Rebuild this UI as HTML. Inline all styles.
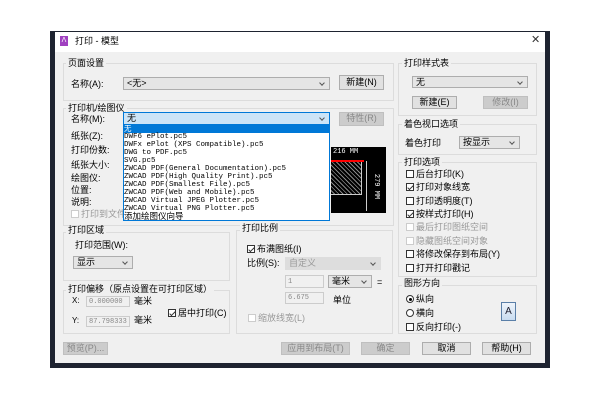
<!DOCTYPE html><html><head><meta charset="utf-8"><style>
*{margin:0;padding:0;box-sizing:border-box}
body{width:600px;height:400px;background:#fff;position:relative;overflow:hidden;font-family:"Liberation Sans","Noto Sans CJK SC",sans-serif;font-size:9px;color:#000}
.a{position:absolute;white-space:nowrap;line-height:1}
.g{position:absolute;border:1px solid #dcdcdc}
.gl{position:absolute;background:#f0f0f0;padding:0 2px;line-height:1;white-space:nowrap;font-size:9px}
.sel{position:absolute;border:1px solid #adadad;background:#e5e5e5;font-size:9px;line-height:11px;padding-left:3px}
.sel:after{content:"";position:absolute;right:5px;top:3px;width:3px;height:3px;border-right:1px solid #555;border-bottom:1px solid #555;transform:rotate(45deg)}
.dis{color:#999}
.btn{position:absolute;border:1px solid #adadad;background:#e1e1e1;text-align:center;font-size:9px;line-height:11px}
.btn.d{background:#ccc;border-color:#bfbfbf;color:#888}
.cb{position:absolute;width:8px;height:8px;border:1px solid #333;background:#fff}
.cb.k:after{content:"";position:absolute;left:2px;top:0;width:2px;height:5px;border-right:1px solid #333;border-bottom:1px solid #333;transform:rotate(45deg)}
.cb.d{border-color:#ccc}
.inp{position:absolute;border:1px solid #ccc;background:#f0f0f0;color:#888;font-family:"Liberation Mono",monospace;font-size:7px;line-height:10px;padding-left:2px}
.li{position:absolute;left:124px;font-family:"Liberation Mono",monospace;font-size:7.5px;line-height:8px;height:8px}
</style></head><body>
<div style="position:absolute;left:50px;top:31px;width:500px;height:337px;background:#1e2330"></div>
<div style="position:absolute;left:55px;top:32px;width:490px;height:331px;background:#f0f0f0"></div>
<div style="position:absolute;left:55px;top:32px;width:490px;height:20px;background:#fff"></div>
<div style="position:absolute;left:60px;top:36px;width:8px;height:10px;background:#a040c0;color:#fff;font-size:7px;line-height:10px;text-align:center">Λ</div>
<div class="a" style="left:75px;top:37px;font-size:9px">打印 - 模型</div>
<div class="a" style="left:531px;top:35px;font-size:11px;color:#333">✕</div>

<!-- 页面设置 -->
<div class="g" style="left:63px;top:63px;width:331px;height:38px"></div>
<div class="gl" style="left:66px;top:59px">页面设置</div>
<div class="a" style="left:71px;top:80px">名称(A):</div>
<div class="sel" style="left:123px;top:77px;width:207px;height:13px">&lt;无&gt;</div>
<div class="btn" style="left:339px;top:75px;width:45px;height:15px;line-height:13px">新建(N)</div>

<!-- 打印机 -->
<div class="g" style="left:63px;top:108px;width:331px;height:118px"></div>
<div class="gl" style="left:66px;top:104px">打印机/绘图仪</div>
<div class="a" style="left:71px;top:115px">名称(M):</div>
<div class="sel" style="left:123px;top:112px;width:207px;height:13px;background:#cce4f7;border-color:#0078d7">无</div>
<div class="btn d" style="left:339px;top:112px;width:45px;height:14px">特性(R)</div>
<div class="a" style="left:71px;top:132px">纸张(Z):</div>
<div class="a" style="left:71px;top:146px">打印份数:</div>
<div class="a" style="left:71px;top:161px">纸张大小:</div>
<div class="a" style="left:71px;top:174px">绘图仪:</div>
<div class="a" style="left:71px;top:186px">位置:</div>
<div class="a" style="left:71px;top:198px">说明:</div>
<div class="cb d" style="left:71px;top:210px"></div>
<div class="a dis" style="left:81px;top:210px">打印到文件</div>
<div style="position:absolute;left:331px;top:147px;width:55px;height:66px;background:#000;overflow:hidden">
<div class="a" style="left:2px;top:2px;color:#fff;font-family:'Liberation Mono',monospace;font-size:7px">216 MM</div>
<div style="position:absolute;left:0;top:13px;width:33px;height:2px;background:#f00"></div>
<div style="position:absolute;left:0;top:15px;width:31px;height:33px;border-right:1px solid #ccc;border-bottom:1px solid #ccc;background:repeating-linear-gradient(45deg,#000 0 2px,#888 2px 3px)"></div>
<div style="position:absolute;left:35px;top:14px;width:1px;height:50px;background:#ccc"></div>
<div class="a" style="left:32px;top:36px;color:#fff;font-family:'Liberation Mono',monospace;font-size:7px;transform:rotate(90deg)">279 MM</div>
</div>
<div style="position:absolute;left:123px;top:125px;width:207px;height:96px;background:#fff;border:1px solid #0078d7"></div>
<div style="position:absolute;left:124px;top:125px;width:205px;height:8px;background:#0078d7"></div>
<div class="li" style="top:125px;color:#fff;font-family:'Noto Sans CJK SC';">无</div>
<div class="li" style="top:133px">DWF6 ePlot.pc5</div>
<div class="li" style="top:141px">DWFx ePlot (XPS Compatible).pc5</div>
<div class="li" style="top:149px">DWG to PDF.pc5</div>
<div class="li" style="top:157px">SVG.pc5</div>
<div class="li" style="top:165px">ZWCAD PDF(General Documentation).pc5</div>
<div class="li" style="top:173px">ZWCAD PDF(High Quality Print).pc5</div>
<div class="li" style="top:181px">ZWCAD PDF(Smallest File).pc5</div>
<div class="li" style="top:189px">ZWCAD PDF(Web and Mobile).pc5</div>
<div class="li" style="top:197px">ZWCAD Virtual JPEG Plotter.pc5</div>
<div class="li" style="top:205px">ZWCAD Virtual PNG Plotter.pc5</div>
<div class="li" style="top:212px;font-family:'Noto Sans CJK SC';font-size:8.5px;line-height:9px">添加绘图仪向导</div>

<!-- 打印区域 -->
<div class="g" style="left:63px;top:232px;width:167px;height:49px"></div>
<div class="gl" style="left:66px;top:226px">打印区域</div>
<div class="a" style="left:75px;top:241px">打印范围(W):</div>
<div class="sel" style="left:73px;top:256px;width:60px;height:13px">显示</div>
<div class="g" style="left:63px;top:290px;width:167px;height:44px"></div>
<div class="gl" style="left:66px;top:285px">打印偏移（原点设置在可打印区域）</div>
<div class="a" style="left:72px;top:297px;font-size:8px">X:</div>
<div class="inp" style="left:86px;top:296px;width:44px;height:11px">0.000000</div>
<div class="a" style="left:134px;top:297px">毫米</div>
<div class="a" style="left:72px;top:317px;font-size:8px">Y:</div>
<div class="inp" style="left:86px;top:316px;width:44px;height:11px">87.798333</div>
<div class="a" style="left:134px;top:316px">毫米</div>
<div class="cb k" style="left:168px;top:309px"></div>
<div class="a" style="left:178px;top:309px">居中打印(C)</div>

<!-- 打印比例 -->
<div class="g" style="left:236px;top:230px;width:157px;height:104px"></div>
<div class="gl" style="left:240px;top:224px">打印比例</div>
<div class="cb k" style="left:247px;top:245px"></div>
<div class="a" style="left:257px;top:245px">布满图纸(I)</div>
<div class="a" style="left:247px;top:259px">比例(S):</div>
<div class="sel dis" style="left:285px;top:257px;width:96px;height:13px;background:#ddd;border-color:#ddd">自定义</div>
<div class="inp" style="left:285px;top:275px;width:39px;height:13px;line-height:12px">1</div>
<div class="sel" style="left:328px;top:275px;width:44px;height:13px">毫米</div>
<div class="a" style="left:377px;top:278px">=</div>
<div class="inp" style="left:285px;top:292px;width:39px;height:12px">6.675</div>
<div class="a" style="left:333px;top:296px">单位</div>
<div class="cb d" style="left:248px;top:314px"></div>
<div class="a dis" style="left:258px;top:314px">缩放线宽(L)</div>

<!-- right column -->
<div class="g" style="left:398px;top:63px;width:139px;height:53px"></div>
<div class="gl" style="left:402px;top:59px">打印样式表</div>
<div class="sel" style="left:412px;top:76px;width:116px;height:12px">无</div>
<div class="btn" style="left:412px;top:96px;width:45px;height:13px">新建(E)</div>
<div class="btn d" style="left:483px;top:96px;width:45px;height:13px">修改(I)</div>
<div class="g" style="left:398px;top:124px;width:139px;height:31px"></div>
<div class="gl" style="left:402px;top:120px">着色视口选项</div>
<div class="a" style="left:405px;top:139px">着色打印</div>
<div class="sel" style="left:459px;top:136px;width:61px;height:13px">按显示</div>
<div class="g" style="left:398px;top:162px;width:139px;height:115px"></div>
<div class="gl" style="left:402px;top:158px">打印选项</div>
<div class="cb" style="left:406px;top:170px"></div><div class="a" style="left:416px;top:170px">后台打印(K)</div>
<div class="cb k" style="left:406px;top:183px"></div><div class="a" style="left:416px;top:183px">打印对象线宽</div>
<div class="cb" style="left:406px;top:197px"></div><div class="a" style="left:416px;top:197px">打印透明度(T)</div>
<div class="cb k" style="left:406px;top:210px"></div><div class="a" style="left:416px;top:210px">按样式打印(H)</div>
<div class="cb d" style="left:406px;top:223px"></div><div class="a dis" style="left:416px;top:223px">最后打印图纸空间</div>
<div class="cb d" style="left:406px;top:237px"></div><div class="a dis" style="left:416px;top:237px">隐藏图纸空间对象</div>
<div class="cb" style="left:406px;top:250px"></div><div class="a" style="left:416px;top:250px">将修改保存到布局(Y)</div>
<div class="cb" style="left:406px;top:264px"></div><div class="a" style="left:416px;top:264px">打开打印戳记</div>
<div class="g" style="left:398px;top:285px;width:139px;height:49px"></div>
<div class="gl" style="left:402px;top:279px">图形方向</div>
<div style="position:absolute;left:406px;top:295px;width:8px;height:8px;border:1px solid #333;border-radius:50%;background:#fff"><div style="position:absolute;left:1.5px;top:1.5px;width:3px;height:3px;border-radius:50%;background:#000"></div></div>
<div class="a" style="left:416px;top:295px">纵向</div>
<div style="position:absolute;left:406px;top:309px;width:8px;height:8px;border:1px solid #333;border-radius:50%;background:#fff"></div>
<div class="a" style="left:416px;top:309px">横向</div>
<div class="cb" style="left:406px;top:323px"></div><div class="a" style="left:416px;top:323px">反向打印(-)</div>
<div style="position:absolute;left:501px;top:302px;width:15px;height:19px;border:1px solid #5a7fa8;background:linear-gradient(#eef4fb,#c9dcf0);font-size:10px;text-align:center;line-height:17px;color:#223">A</div>

<!-- bottom buttons -->
<div class="btn d" style="left:63px;top:342px;width:45px;height:13px">预览(P)...</div>
<div class="btn d" style="left:281px;top:342px;width:69px;height:13px">应用到布局(T)</div>
<div class="btn d" style="left:361px;top:342px;width:49px;height:13px">确定</div>
<div class="btn" style="left:422px;top:342px;width:49px;height:13px">取消</div>
<div class="btn" style="left:482px;top:342px;width:49px;height:13px">帮助(H)</div>
</body></html>
